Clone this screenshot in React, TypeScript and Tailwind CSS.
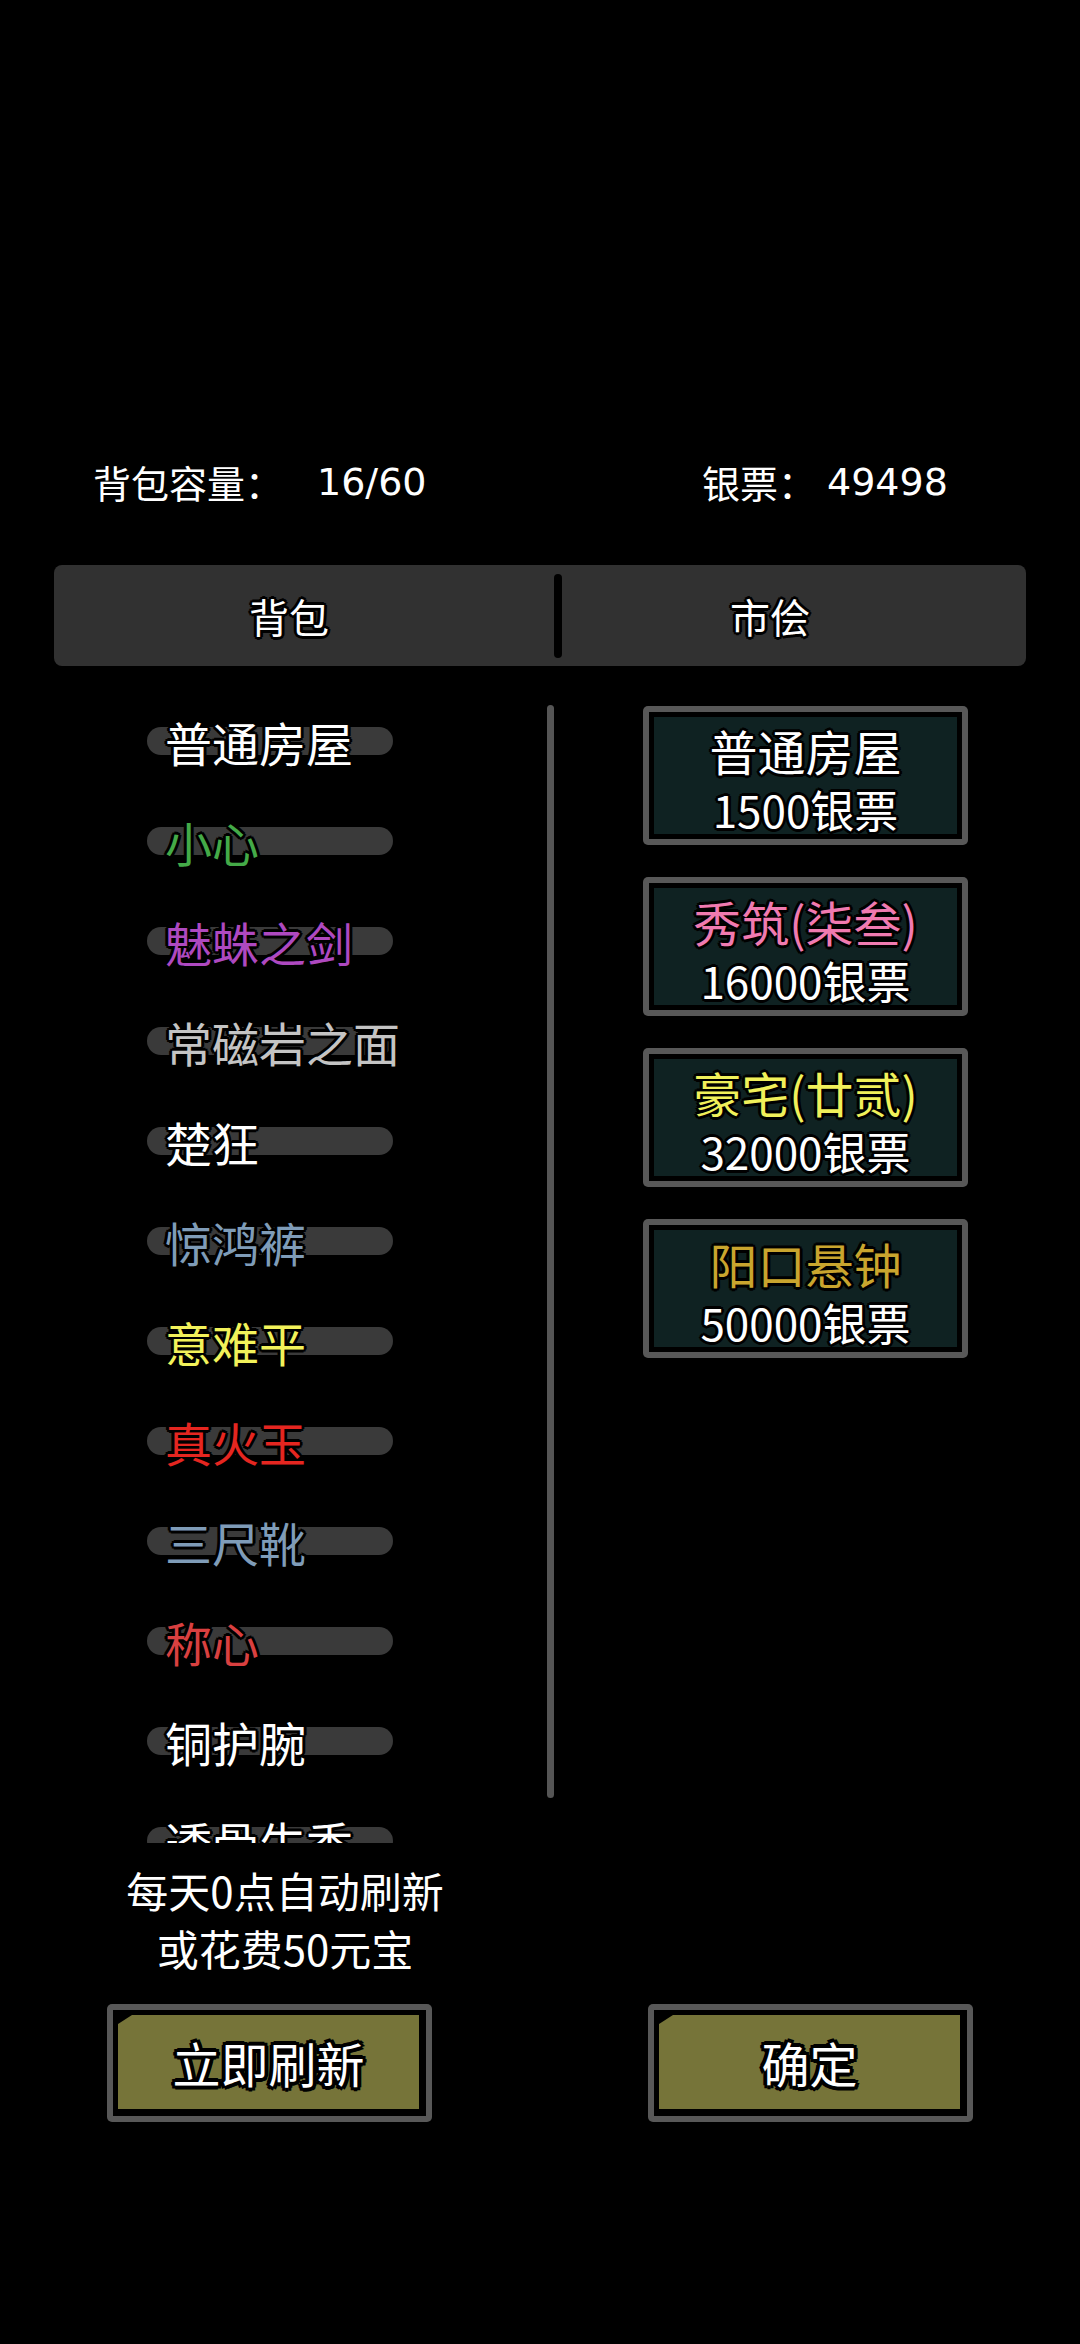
import React from "react"

const outline =
  "[text-shadow:-2px_-2px_0_#000,2px_-2px_0_#000,-2px_2px_0_#000,2px_2px_0_#000,0_-3px_0_#000,0_3px_0_#000,-3px_0_0_#000,3px_0_0_#000]"
const thick =
  "[text-shadow:-3px_-3px_0_#000,3px_-3px_0_#000,-3px_3px_0_#000,3px_3px_0_#000,0_-4px_0_#000,0_4px_0_#000,-4px_0_0_#000,4px_0_0_#000]"

const bag = [
  { name: "普通房屋", color: "text-white" },
  { name: "小心", color: "text-[#44aa48]" },
  { name: "魅蛛之剑", color: "text-[#ae49c0]" },
  { name: "常磁岩之面", color: "text-[#c4c4c4]" },
  { name: "楚狂", color: "text-white" },
  { name: "惊鸿裤", color: "text-[#7f9cb8]" },
  { name: "意难平", color: "text-[#f2f25a]" },
  { name: "真火玉", color: "text-[#e52620]" },
  { name: "三尺靴", color: "text-[#7f9cb8]" },
  { name: "称心", color: "text-[#d94040]" },
  { name: "铜护腕", color: "text-white" },
  { name: "透骨生香", color: "text-white" },
]

const shop = [
  { name: "普通房屋", price: "1500银票", color: "text-white" },
  { name: "秀筑(柒叁)", price: "16000银票", color: "text-[#f07ab0]" },
  { name: "豪宅(廿贰)", price: "32000银票", color: "text-[#f0f05a]" },
  { name: "阳口悬钟", price: "50000银票", color: "text-[#c9a52e]" },
]

const ActionButton = ({ label }: { label: string }) => (
  <div className="w-[325px] h-[118px] rounded-[5px] bg-[#585858] p-[6px]">
    <div className="h-full bg-black pt-[5px] pl-[5px] pr-[7px] pb-[7px]">
      <div className="h-full bg-[#767439] [clip-path:polygon(14px_0,100%_0,100%_100%,0_100%,0_9px)] flex items-center justify-center">
        <span className={`text-[48px] leading-none text-white ${thick}`}>{label}</span>
      </div>
    </div>
  </div>
)

export default function App() {
  return (
    <div className="w-[1080px] h-[2344px] bg-black overflow-hidden text-white font-['Noto_Sans_CJK_SC',sans-serif]">
      {/* header */}
      <div className="mt-[457px] h-[50px] flex items-center text-[38px] leading-none">
        <div className="w-[702px] pl-[93px] flex items-center">
          <span>背包容量：</span>
          <span className="ml-[34px] font-['DejaVu_Sans',sans-serif]">16/60</span>
        </div>
        <div className="flex items-center">
          <span>银票：</span>
          <span className="ml-[11px] font-['DejaVu_Sans',sans-serif]">49498</span>
        </div>
      </div>

      {/* tabs */}
      <div className="mt-[58px] mx-[54px] h-[101px] bg-[#313131] rounded-[8px] flex items-center text-[40px] leading-none">
        <div className={`w-[500px] pr-[30px] text-center ${outline}`}>背包</div>
        <div className="w-[8px] h-[84px] bg-black rounded-full" />
        <div className={`flex-1 pr-[48px] text-center ${outline}`}>市侩</div>
      </div>

      {/* content */}
      <div className="mt-[25px] flex">
        <div className="ml-[147px] w-[400px] h-[1152px] overflow-hidden flex flex-col">
          {bag.map((it, i) => (
            <div key={i} className="h-[100px] shrink-0 grid items-center justify-start">
              <div className="col-start-1 row-start-1 w-[246px] h-[28px] rounded-full bg-[#3a3a3a]" />
              <div
                className={`col-start-1 row-start-1 pl-[18px] text-[47px] leading-none whitespace-nowrap ${it.color} ${outline}`}>
                {it.name}
              </div>
            </div>
          ))}
        </div>
        <div className="mt-[14px] w-[7px] h-[1093px] rounded-full bg-[#555555]" />

        <div className="ml-[89px] mt-[15px] flex flex-col gap-[32px]">
          {shop.map((s, i) => (
            <div key={i} className="w-[325px] h-[139px] rounded-[5px] bg-[#585858] p-[6px]">
              <div className="h-full bg-black p-[5px]">
                <div className="h-full bg-[#0f2222] flex flex-col items-center">
                  <div className={`mt-[8px] h-[50px] leading-[50px] text-[48px] ${s.color} ${outline}`}>
                    {s.name}
                  </div>
                  <div className={`mt-[9px] h-[50px] leading-[50px] text-[44px] text-white ${outline}`}>
                    {s.price}
                  </div>
                </div>
              </div>
            </div>
          ))}
        </div>
      </div>

      {/* refresh hint */}
      <div className="mt-[18px] w-[570px] text-center text-[42px] leading-[58px]">
        <div>每天0点自动刷新</div>
        <div>或花费50元宝</div>
      </div>

      {/* buttons */}
      <div className="mt-[27px] flex">
        <div className="ml-[107px]">
          <ActionButton label="立即刷新" />
        </div>
        <div className="ml-[216px]">
          <ActionButton label="确定" />
        </div>
      </div>
    </div>
  )
}
